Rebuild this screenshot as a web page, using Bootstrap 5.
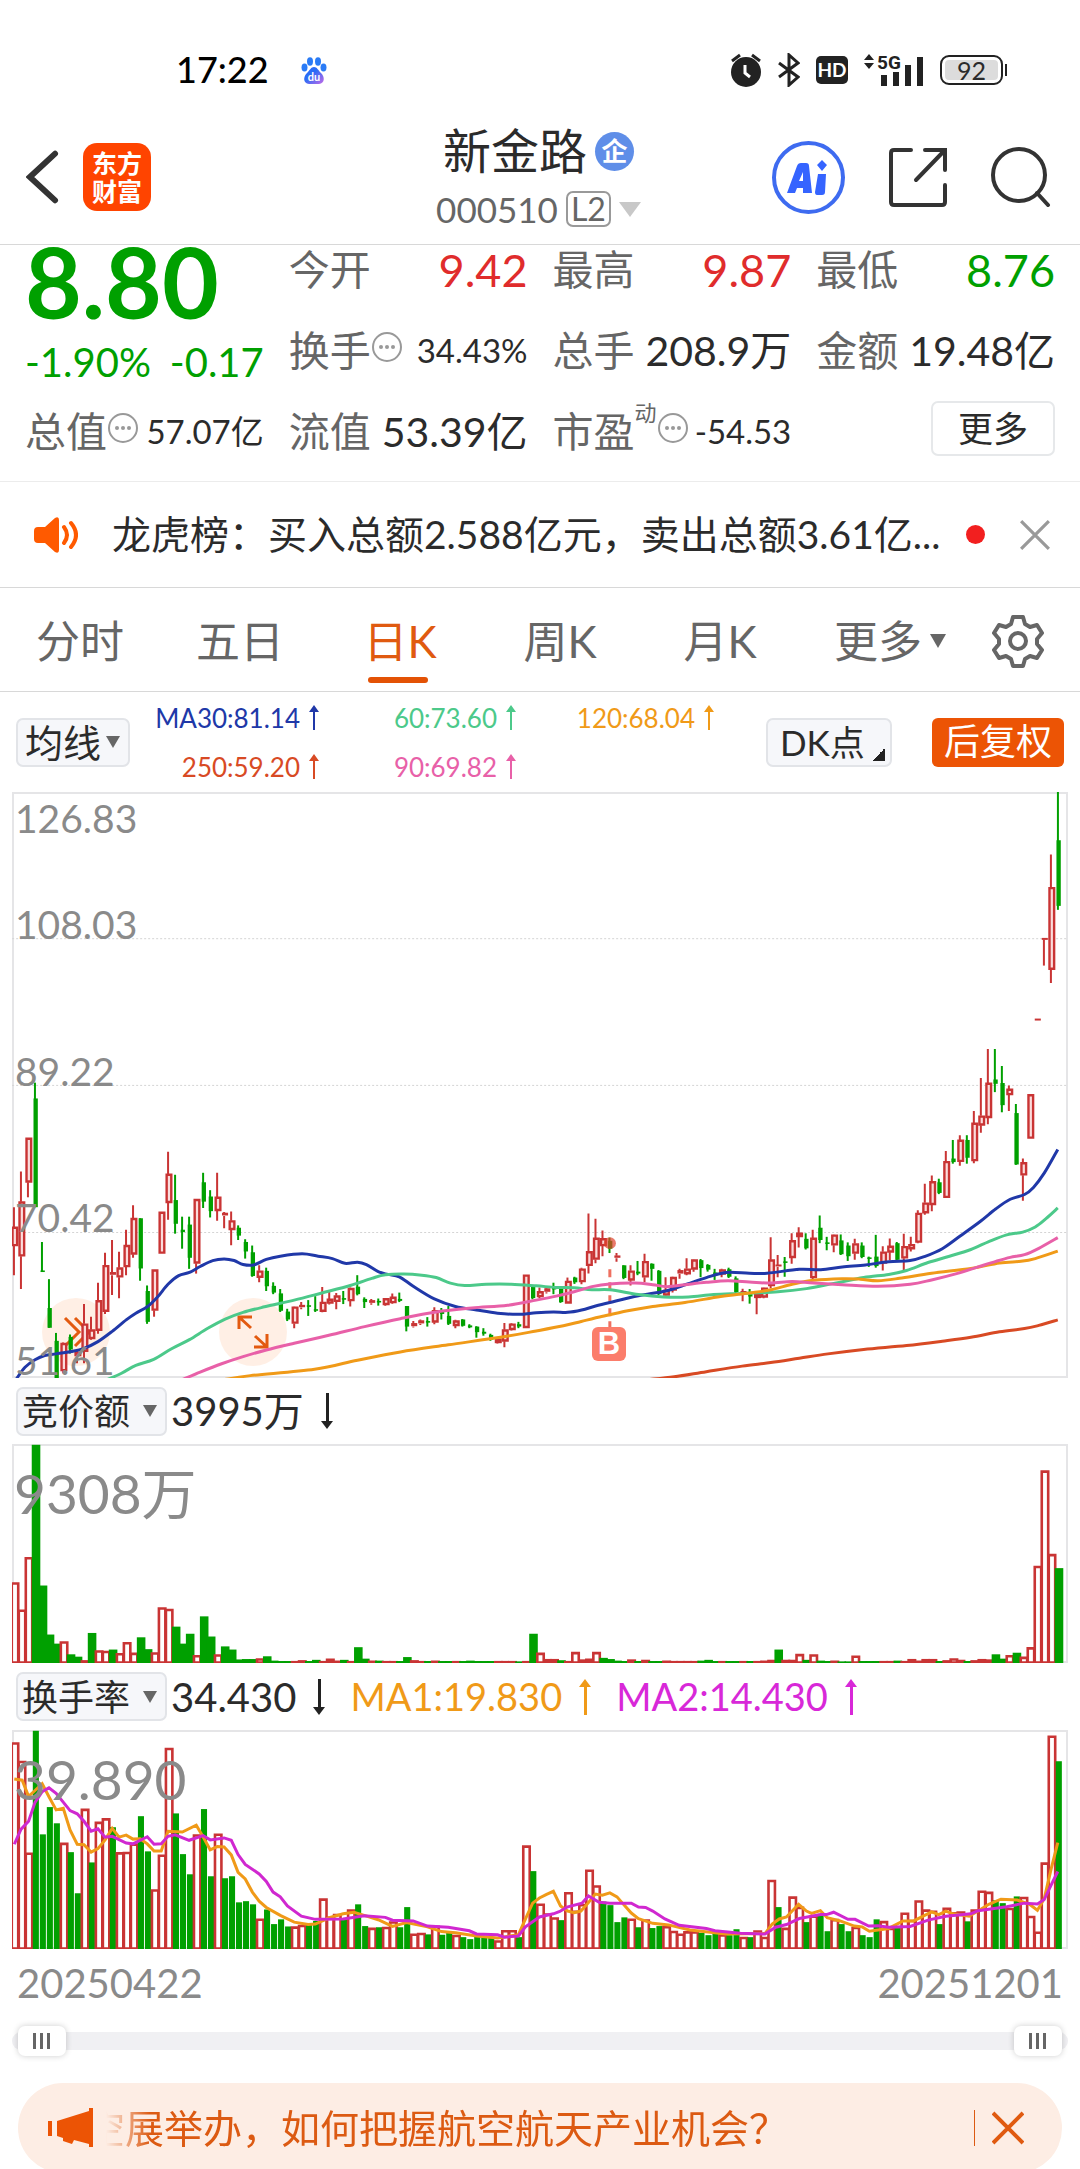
<!DOCTYPE html>
<html lang="zh-CN">
<head>
<meta charset="utf-8">
<meta name="viewport" content="width=device-width, initial-scale=1">
<title>新金路 000510</title>
<link href="https://cdn.jsdelivr.net/npm/bootstrap@5.3.0/dist/css/bootstrap.min.css" rel="stylesheet">
<style>
:root{--up:#c93434;--down:#00a000;--brand:#ec5405;--line:#d8d8d8;--ink:#2b2b2b;--soft:#666;--axis:#8a8a8a}
body{font-family:Lato,"Noto Sans CJK SC",sans-serif;color:var(--ink);background:#fff;line-height:1.2}
svg{display:block;flex:none}
button,select{font-family:inherit;color:inherit;padding:0}
.plain-btn{border:0;background:none;line-height:1}
.side{flex:1}
.side-tools{gap:43px}
.status-bar{height:110px;padding:45px 72px 15px 176px}
.clock{font-size:36px;color:#000;font-weight:500}
.battery{width:63px;height:30px;border:2px solid #222;border-radius:9px;font-size:25px;background:#dcdcdc;box-shadow:inset 0 0 0 3px #fff;line-height:26px}
.status-icons{gap:16px}
.top-bar{height:135px;border-bottom:1px solid var(--line);padding:0 29px 0 26px}
.logo-tile{width:68px;height:68px;border-radius:14px;background:#ff4400;color:#fff;font-size:25px;line-height:28px;font-weight:700}
.stock-name{font-size:48px;line-height:56px}
.stock-code{font-size:35px;line-height:44px;color:var(--soft);margin-top:8px}
.level-tag{border:2px solid #999;border-radius:7px;font-size:32px;line-height:32px;padding:0 3px}
.corp-tag{width:39px;height:39px;border-radius:50%;background:#5f8ee8;color:#fff;font-size:26px;font-weight:700;line-height:38px}
.ai-ring{width:73px;height:73px;border:4px solid #3e6bf0;border-radius:50%;color:#3e6bf0}
.quote{display:grid;grid-template-columns:repeat(4,1fr);grid-auto-rows:50px;column-gap:25px;row-gap:31px;padding:0 25px 24px;border-bottom:1px solid #ececec}
.price-block{grid-row:span 2;color:var(--down)}
.last-price{font-size:98px;line-height:72px;font-weight:700}
.change-line{font-size:40px;line-height:50px;margin-top:20px}
.cell-label{font-size:41px;line-height:50px;color:var(--soft)}
.val-lg{font-size:45px}.val-md{font-size:41px}.val-sm{font-size:33px}
.quote svg{margin-bottom:8px}
.txt-up{color:#e02c2c}.txt-down{color:var(--down)}
.dyn{font-size:22px;color:var(--soft);align-self:flex-start;line-height:12px}
.more-btn{width:124px;height:55px;border:2px solid #e6e8ea;border-radius:7px;font-size:35px;background:#fff;margin-bottom:8px}
.notice{height:106px;border-bottom:1px solid var(--line);padding:0 29px 0 34px;font-size:39px;gap:34px}
.notice-txt{min-width:0;overflow:hidden;white-space:nowrap;margin-right:-24px}
.red-dot{width:19px;height:19px;border-radius:50%;background:#f21f1f;flex:none}
.k-tabs{display:grid;grid-template-columns:repeat(5,16fr) 18fr 10fr;height:104px;border-bottom:1px solid var(--line);font-size:44px;color:var(--soft)}
.k-tabs .plain-btn{position:relative;padding-top:2px}
.k-tabs .active{color:#e05a10}
.k-tabs .active::after{content:"";position:absolute;left:50%;bottom:8px;width:60px;height:6px;margin-left:-32px;border-radius:3px;background:#e35205}
.tri{display:inline-block;border:solid transparent;border-width:14px 8px 0;border-top-color:var(--soft)}
.tri-code{border-width:15px 11px 0;border-top-color:#c8c8c8}
.ma-bar{height:100px;padding:0 16px}
.pick{appearance:none;border:2px solid #e2e4e8;border-radius:7px;background:#f6f7fa url("data:image/svg+xml,%3Csvg xmlns='http://www.w3.org/2000/svg' viewBox='0 0 14 12'%3E%3Cpath d='M0 0h14L7 12z' fill='%23666'/%3E%3C/svg%3E") no-repeat right 8px center/14px 12px;height:49px;font-size:36px;line-height:44px;padding-left:4px}
.pick-ma{width:114px;font-size:38px;padding-left:7px}
.pick-sub{width:151px}
.dk-btn{width:126px;height:49px;border:2px solid #e2e4e8;border-radius:7px;background:linear-gradient(135deg,transparent 50%,#222 50%) right 5px bottom 4px/13px 13px no-repeat #f6f7fa;font-size:35px;line-height:44px;text-align:left;padding-left:12px}
.adj-btn{width:132px;height:49px;border:0;border-radius:6px;background:var(--brand);color:#fff;font-size:36px;margin-left:40px}
.ma-grid{display:grid;grid-template-columns:162px 197px 198px;row-gap:15px;font-size:26px;line-height:34px;margin-left:28px}
.c-30{color:#2038a8}.c-60{color:#4cc98a}.c-90{color:#e860a8}.c-120{color:#f09a18}.c-250{color:#d84a24}.c-m2{color:#d828d8}
.ma-grid>div{display:flex;justify-content:flex-end;align-items:center;gap:8px}
.pane{position:relative;margin:0 12px;box-shadow:inset 0 0 0 2px #e5e5e7}
.pane>svg{width:100%;position:relative}
.pane-k{height:586px}.pane-k>svg{height:586px}
.pane-s{height:219px}.pane-s>svg{height:219px}
.axis-label{position:absolute;left:3px;font-size:39px;line-height:40px;color:var(--axis)}
.ax1{top:6px}.ax2{bottom:434px}.ax3{bottom:287px}.ax4{bottom:141px}.ax5{bottom:-2px}
.peak{position:absolute;left:2px;top:19px;font-size:55px;line-height:60px;color:var(--axis)}
.round-tool{position:absolute;width:68px;height:68px;border:0;border-radius:50%;background:rgba(255,216,192,.42);display:flex;align-items:center;justify-content:center;top:506px}
.tool-next{left:30px}.tool-zoom{left:207px}
.buy-pin{position:absolute;left:580px;top:535px;width:34px;height:34px;border-radius:6px;background:#fb7d6b;color:#fff;font:700 31px/34px "Liberation Sans",sans-serif;text-align:center}
.sub-head{height:66px;padding:0 16px;font-size:38px}
.sub-val{font-size:40px}
.pane-s+.sub-head{height:67px}
.dates{height:68px;padding:0 17px;font-size:40px;color:var(--axis)}
.range-box{position:relative;height:48px;margin:0 12px}
.range-box::before{content:"";position:absolute;left:0;right:0;top:15px;height:18px;border-radius:9px;background:#f0f0f3}
.range-box input{position:absolute;left:6px;right:6px;top:9px;width:calc(100% - 12px);height:30px;margin:0;appearance:none;background:none;pointer-events:none}
.range-box input::-webkit-slider-thumb{appearance:none;pointer-events:auto;width:48px;height:30px;border-radius:7px;box-shadow:0 0 6px rgba(0,0,0,.2);background:linear-gradient(#666,#666) 15px 7px/3px 16px no-repeat,linear-gradient(#666,#666) 22px 7px/3px 16px no-repeat,linear-gradient(#666,#666) 29px 7px/3px 16px no-repeat,#fff}
.promo{height:90px;margin:18px 18px 0;border-radius:45px;background:#fdede4;color:#dc5a12;padding:0 38px 0 30px;font-size:39px}
.ticker{overflow:hidden;display:flex;height:52px;line-height:52px;margin-left:12px;color:#dc5a12;text-decoration:none;-webkit-mask-image:linear-gradient(90deg,transparent,#000 44px);mask-image:linear-gradient(90deg,transparent,#000 44px)}
.ticker span{margin-left:-20px;white-space:nowrap}
.promo-sep{width:1px;height:36px;background:#dc5a12;margin-right:17px}
</style>
</head>
<body>
<div class="vh-100 overflow-hidden d-flex flex-column">
<div class="status-bar d-flex align-items-center justify-content-between flex-shrink-0">
  <div class="d-flex align-items-center gap-4">
    <span class="clock">17:22</span>
    <svg class="ms-2" width="26" height="27" viewBox="0 0 26 27"><defs><linearGradient id="pw" x1="0" y1="0" x2="1" y2="1"><stop offset=".4" stop-color="#2a6cf6"/><stop offset="1" stop-color="#c46ae8"/></linearGradient></defs><g fill="#2a7bf6"><ellipse cx="3.500" cy="10.500" rx="3" ry="4"/><ellipse cx="9" cy="4.500" rx="3" ry="4.200"/><ellipse cx="17" cy="4.500" rx="3" ry="4.200"/><ellipse cx="22.500" cy="10.500" rx="3" ry="4"/></g><path d="M13 10c3 0 4 3 7 6 4 4 4 10-2 11H8c-6-1-6-7-2-11 3-3 4-6 7-6z" fill="url(#pw)"/><text x="13" y="24" font-size="11" font-weight="700" fill="#fff" text-anchor="middle">du</text></svg>
  </div>
  <div class="status-icons d-flex align-items-center">
    <svg width="32" height="34" viewBox="0 0 32 34"><circle cx="16" cy="19" r="15" fill="#222"/><path d="M2 8l8-6M30 8l-8-6" stroke="#222" stroke-width="3"/><path d="M15 12v8l5 4" stroke="#fff" stroke-width="3" fill="none"/></svg>
    <svg width="22" height="34" viewBox="0 0 22 34"><path d="M1 10l19 14-9 8V2l9 8L1 24" fill="none" stroke="#222" stroke-width="3"/></svg>
    <svg width="32" height="28" viewBox="0 0 32 28"><rect width="32" height="28" rx="5" fill="#222"/><text x="16" y="21" font-size="19" font-weight="700" fill="#fff" text-anchor="middle">HD</text></svg>
    <svg class="ms-n1" width="60" height="38" viewBox="0 -5 60 38"><path d="M0 4l5-6 5 6zM0 7h10l-5 6z" fill="#222"/><text x="13" y="13" font-size="19" font-weight="700" font-family="Roboto" fill="#222">5G</text><path d="M17 19h6v11h-6zM29 16h6v14h-6zM41 9h6v21h-6zM53 1h6v29h-6z" fill="#222"/></svg>
    <div class="d-flex align-items-center"><div class="battery text-center">92</div><svg width="5" height="12" viewBox="0 0 5 12"><path d="M2 0h2v12H2z" fill="#222"/></svg></div>
  </div>
</div>

<header class="top-bar d-flex align-items-center flex-shrink-0">
  <div class="side d-flex align-items-center gap-4">
    <button class="plain-btn" aria-label="返回"><svg width="33" height="54" viewBox="0 0 34 54"><path d="M30 3L4 27l26 24" fill="none" stroke="#333" stroke-width="6" stroke-linecap="round"/></svg></button>
    <button class="logo-tile border-0 text-center" aria-label="东方财富">东方<br>财富</button>
  </div>
  <div>
    <div class="d-flex align-items-center justify-content-center gap-2"><span class="stock-name">新金路</span><span class="corp-tag text-center">企</span></div>
    <div class="stock-code d-flex align-items-center justify-content-center gap-2"><span>000510</span><span class="level-tag">L2</span><i class="tri tri-code"></i></div>
  </div>
  <div class="side side-tools d-flex align-items-center justify-content-end">
    <button class="plain-btn ai-ring" aria-label="AI"><svg width="65" height="65" viewBox="0 0 65 65"><path d="M11 48l10-27q1-3 4-3h5q3 0 3 3l3 27h-9v-5h-6l-2 5zM23 36h4v-9z" fill="#3564ff"/><path d="M42 29h8l-1 18q0 3-3 3h-5q-2 0-2-3zM46 15l5 5-5 6-5-6z" fill="#3564ff"/></svg></button>
    <button class="plain-btn" aria-label="分享"><svg width="60" height="60" viewBox="0 0 60 60"><path d="M23 3H6Q3 3 3 6v49q0 3 3 3h48q3 0 3-3V38M37 3h20v20M57 3L28 33" fill="none" stroke="#333" stroke-width="4" stroke-linecap="round"/></svg></button>
    <button class="plain-btn" aria-label="搜索"><svg width="60" height="60" viewBox="0 0 60 60"><circle cx="28" cy="28" r="26" fill="none" stroke="#333" stroke-width="4"/><path d="M46 46l11 12" stroke="#333" stroke-width="4" stroke-linecap="round"/></svg></button>
  </div>
</header>

<section class="quote flex-shrink-0">
  <div class="price-block">
    <div class="last-price">8.80</div>
    <div class="change-line d-flex justify-content-between"><span>-1.90%</span><span>-0.17</span></div>
  </div>
  <div class="d-flex align-items-center justify-content-between"><span class="cell-label">今开</span><span class="val-lg txt-up">9.42</span></div>
  <div class="d-flex align-items-center justify-content-between"><span class="cell-label">最高</span><span class="val-lg txt-up">9.87</span></div>
  <div class="d-flex align-items-center justify-content-between"><span class="cell-label">最低</span><span class="val-lg txt-down">8.76</span></div>
  <div class="d-flex align-items-center justify-content-between"><span class="d-flex align-items-center"><span class="cell-label">换手</span><svg width="32" height="32"><use href="#dots"/></svg></span><span class="val-sm">34.43%</span></div>
  <div class="d-flex align-items-center justify-content-between"><span class="cell-label">总手</span><span class="val-md">208.9万</span></div>
  <div class="d-flex align-items-center justify-content-between"><span class="cell-label">金额</span><span class="val-md">19.48亿</span></div>
  <div class="d-flex align-items-center justify-content-between"><span class="d-flex align-items-center"><span class="cell-label">总值</span><svg width="32" height="32"><use href="#dots"/></svg></span><span class="val-sm">57.07亿</span></div>
  <div class="d-flex align-items-center justify-content-between"><span class="cell-label">流值</span><span class="val-md">53.39亿</span></div>
  <div class="d-flex align-items-center justify-content-between"><span class="d-flex align-items-center"><span class="cell-label">市盈</span><span class="dyn">动</span><svg width="32" height="32"><use href="#dots"/></svg></span><span class="val-sm">-54.53</span></div>
  <div class="d-flex align-items-center justify-content-end"><button class="more-btn">更多</button></div>
</section>
<svg width="0" height="0" class="position-absolute"><symbol id="dots" viewBox="0 0 32 32"><circle cx="16" cy="16" r="14" fill="none" stroke="#999" stroke-width="2"/><g fill="#999"><circle cx="10" cy="16" r="2"/><circle cx="16" cy="16" r="2"/><circle cx="22" cy="16" r="2"/></g></symbol>
<symbol id="arr" viewBox="0 0 12 25"><path d="M6 0l5 7H7v18H5V7H1z" fill="currentColor"/></symbol></svg>

<section class="notice d-flex align-items-center flex-shrink-0">
  <svg width="44" height="36" viewBox="0 0 44 36"><path d="M4 10h7L21 1q4-2 4 2v30q0 4-4 2l-10-9H4q-4 0-4-4v-8q0-4 4-4z" fill="#ff5a00"/><path d="M30 10q6 8 0 16M37 6q10 12 0 24" fill="none" stroke="#ff5a00" stroke-width="4" stroke-linecap="round"/></svg>
  <a class="notice-txt flex-fill text-reset text-decoration-none" href="#">龙虎榜：买入总额2.588亿元，卖出总额3.61亿...</a>
  <span class="red-dot"></span>
  <button class="plain-btn" aria-label="关闭"><svg width="32" height="32" viewBox="0 0 30 30"><path d="M2 2l26 26M28 2L2 28" stroke="#999" stroke-width="3"/></svg></button>
</section>

<nav class="k-tabs flex-shrink-0">
  <button class="plain-btn">分时</button><button class="plain-btn">五日</button><button class="plain-btn active">日K</button><button class="plain-btn">周K</button><button class="plain-btn">月K</button>
  <button class="plain-btn d-flex align-items-center justify-content-center gap-2">更多<i class="tri"></i></button>
  <button class="plain-btn pe-4 d-flex align-items-center justify-content-center" aria-label="设置"><svg width="54" height="54" viewBox="0 0 54 54" fill="none" stroke="#666" stroke-width="4" stroke-linejoin="round"><path d="M22 3h10l2 7 5 3 7-2 5 8-5 6v5l5 6-5 8-7-2-5 3-2 7H22l-2-7-5-3-7 2-5-8 5-6v-5l-5-6 5-8 7 2 5-3z"/><circle cx="27" cy="27" r="8"/></svg></button>
</nav>

<section class="ma-bar d-flex align-items-center flex-shrink-0">
  <select class="pick pick-ma" aria-label="均线"><option>均线</option></select>
  <div class="ma-grid">
    <div class="c-30">MA30:81.14<svg width="12" height="25"><use href="#arr"/></svg></div>
    <div class="c-60">60:73.60<svg width="12" height="25"><use href="#arr"/></svg></div>
    <div class="c-120">120:68.04<svg width="12" height="25"><use href="#arr"/></svg></div>
    <div class="c-250">250:59.20<svg width="12" height="25"><use href="#arr"/></svg></div>
    <div class="c-90">90:69.82<svg width="12" height="25"><use href="#arr"/></svg></div>
  </div>
  <button class="dk-btn ms-auto">DK点</button>
  <button class="adj-btn">后复权</button>
</section>

<div class="pane pane-k flex-shrink-0">
  <button class="round-tool tool-next" aria-label="下一页"><svg width="32" height="34" viewBox="0 0 32 34" fill="none" stroke="#e35a10" stroke-width="3"><path d="M5 3l14 14L5 31M15 3l14 14-14 14"/></svg></button>
  <button class="round-tool tool-zoom" aria-label="放大"><svg width="34" height="36" viewBox="0 0 34 36" fill="none" stroke="#e35a10" stroke-width="3"><path d="M15 14L3 3M3 15V3h13M19 22l12 11M31 20v13H18"/></svg></button>
  <svg id="kline" viewBox="33.6 30 2954 1482" preserveAspectRatio="none"></svg>
  <span class="axis-label ax1">126.83</span><span class="axis-label ax2">108.03</span><span class="axis-label ax3">89.22</span><span class="axis-label ax4">70.42</span><span class="axis-label ax5">51.61</span>
  <span class="buy-pin">B</span>
</div>

<div class="sub-head d-flex align-items-center flex-shrink-0">
  <select class="pick pick-sub" aria-label="副图一"><option>竞价额</option></select>
  <span class="sub-val ms-1">3995万</span><svg class="ms-3" width="14" height="36" viewBox="0 0 12 36"><path d="M6 36l6-8H8V0H5v28H0z" fill="#222"/></svg>
</div>
<div class="pane pane-s flex-shrink-0"><svg id="auction" viewBox="33.6 163 2954 554" preserveAspectRatio="none"></svg><span class="peak">9308万</span></div>

<div class="sub-head d-flex align-items-center flex-shrink-0">
  <select class="pick pick-sub" aria-label="副图二"><option>换手率</option></select>
  <span class="sub-val ms-1">34.430</span><svg class="ms-3" width="14" height="36" viewBox="0 0 12 36"><path d="M6 36l6-8H8V0H5v28H0z" fill="#222"/></svg>
  <span class="c-120 ms-4">MA1:19.830</span><svg class="c-120 ms-3" width="14" height="36" viewBox="0 0 12 36"><path d="M6 0l6 8H8v28H5V8H0z" fill="currentColor"/></svg>
  <span class="c-m2 ms-4">MA2:14.430</span><svg class="c-m2 ms-3" width="14" height="36" viewBox="0 0 12 36"><path d="M6 0l6 8H8v28H5V8H0z" fill="currentColor"/></svg>
</div>
<div class="pane pane-s flex-shrink-0"><svg id="turnover" viewBox="33.6 887 2954 554" preserveAspectRatio="none"></svg><span class="peak">39.890</span></div>

<div class="dates d-flex align-items-center justify-content-between flex-shrink-0"><span>20250422</span><span>20251201</span></div>
<div class="range-box flex-shrink-0"><input type="range" value="0" aria-label="起始日期"><input type="range" value="100" aria-label="结束日期"></div>

<section class="promo d-flex align-items-center flex-shrink-0">
  <svg width="46" height="40" viewBox="0 0 46 40"><path d="M0 13h4v15H0zM9 13l32-10V0h4v39h-4v-3l-15-4-2 4-9-3v-3l-6-2z" fill="#ec5405"/></svg>
  <a class="ticker flex-fill" href="#"><span>空展举办，如何把握航空航天产业机会？</span></a>
  <span class="promo-sep"></span>
  <button class="plain-btn" aria-label="关闭"><svg width="32" height="34" viewBox="0 0 32 34"><path d="M1 2l30 30M31 2L1 32" stroke="#e05a10" stroke-width="4"/></svg></button>
</section>
</div>

<script src="https://cdn.jsdelivr.net/npm/bootstrap@5.3.0/dist/js/bootstrap.bundle.min.js"></script>
<script>
const RED='#c93434',GREEN='#00a000',X=i=>39+19.6*i;
const line=(c,p,w)=>`<path d="${p}" fill="none" stroke="${c}" stroke-width="${w}" vector-effect="non-scaling-stroke"/>`;
// each candle: colour high top bottom low
const candles=`r1080 1130 1178 1252,r990 1066 1204 1287,r905 905 1017 1055,g765 805 1080 1080,g1168 1240 1243 1243,g1262 1335 1385 1385,g1398 1418 1512 1512,r1422 1424 1494 1500,g1402 1408 1440 1450,r1440 1446 1456 1475,r1325 1375 1445 1475,r1357 1390 1413 1415,r1271 1316 1392 1400,r1195 1227 1344 1350,r1163 1245 1252 1302,r1193 1233 1257 1310,r1137 1176 1231 1252,r1075 1108 1199 1208,g1108 1108 1235 1266,g1278 1292 1370 1375,r1238 1238 1341 1357,r1092 1092 1197 1197,r940 996 1069 1112,g998 1062 1122 1147,g1104 1137 1143 1185,g1104 1124 1208 1236,r1060 1060 1222 1248,g993 1017 1066 1082,g1037 1053 1090 1106,r993 1054 1089 1114,r1092 1095 1102 1133,r1091 1114 1137 1176,g1126 1132 1152 1163,g1161 1168 1192 1210,g1177 1194 1254 1256,r1227 1241 1258 1270,g1233 1241 1280 1292,g1270 1279 1296 1300,g1287 1298 1342 1345,g1337 1344 1364 1368,r1331 1332 1374 1386,r1320 1328 1334 1338,g1315 1328 1331 1355,g1305 1338 1342 1345,r1282 1320 1344 1346,r1290 1312 1323 1326,r1297 1304 1319 1338,g1292 1310 1314 1325,r1283 1285 1317 1331,g1252 1281 1300 1303,g1308 1312 1320 1335,r1312 1316 1323 1327,g1311 1317 1321 1329,r1310 1311 1327 1329,r1298 1307 1322 1324,g1296 1312 1317 1320,g1330 1330 1382 1394,r1368 1374 1382 1384,r1364 1367 1375 1378,g1358 1368 1371 1382,r1333 1341 1371 1376,g1335 1340 1350 1364,g1330 1355 1375 1378,r1365 1367 1380 1386,g1363 1364 1380 1382,g1376 1379 1384 1386,g1381 1382 1396 1410,g1386 1395 1400 1405,g1400 1403 1415 1418,r1410 1413 1423 1425,r1373 1390 1419 1434,r1373 1375 1390 1392,g1370 1376 1382 1386,r1251 1251 1385 1385,g1280 1280 1310 1313,r1283 1293 1307 1310,r1282 1286 1295 1298,g1271 1284 1288 1300,g1280 1284 1320 1322,r1258 1267 1323 1323,g1256 1258 1270 1274,r1233 1236 1269 1275,r1096 1192 1228 1248,r1109 1158 1212 1222,r1139 1159 1178 1204,g1157 1165 1185 1196,r1196 1203 1209 1218,g1227 1227 1259 1262,r1227 1241 1265 1278,g1216 1243 1248 1252,r1198 1217 1257 1270,g1222 1223 1236 1266,g1239 1241 1300 1302,r1257 1290 1303 1304,r1256 1257 1290 1296,r1236 1240 1249 1261,r1209 1236 1249 1252,r1212 1213 1237 1243,g1211 1214 1234 1257,g1224 1226 1238 1243,g1236 1245 1252 1264,r1236 1238 1250 1257,g1233 1237 1256 1259,g1255 1260 1295 1300,r1286 1293 1297 1318,g1287 1300 1306 1324,r1295 1299 1309 1351,r1283 1284 1308 1310,r1156 1213 1279 1285,r1201 1226 1231 1257,g1206 1217 1221 1256,r1146 1164 1208 1223,r1131 1145 1155 1182,g1146 1160 1184 1187,r1137 1158 1259 1262,g1101 1132 1163 1171,g1155 1169 1173 1189,r1149 1150 1176 1194,g1149 1164 1199 1201,g1169 1177 1204 1216,r1160 1172 1197 1213,g1169 1177 1206 1209,g1205 1207 1210 1231,g1150 1205 1229 1233,r1179 1193 1222 1240,r1159 1178 1194 1214,g1168 1171 1213 1218,r1147 1179 1209 1239,r1155 1174 1186 1192,r1088 1095 1169 1171,r1021 1069 1095 1099,r1000 1015 1074 1090,g1008 1017 1044 1047,r938 964 1056 1057,g910 957 966 970,r898 910 965 975,g898 910 955 970,r837 867 963 969,r753 849 873 892,r680 766 854 870,g680 757 768 789,g723 766 822 840,r772 781 796 837,g819 842 972 973,r957 967 999 1064,r795 795 906 906,r604 604 608 608,r400 400 403 469,r188 271 479 513,g30 152 318 328`.split(',');
function spline(s){
  const p=s.trim().split(/\s+/).map(q=>q.split(',').map(Number));let d='M'+p[0];
  for(let i=0;i<p.length-1;i++){const a=p[i-1]||p[i],b=p[i],c=p[i+1],e=p[i+2]||c;
    d+=`C${b[0]+(c[0]-a[0])/6},${b[1]+(c[1]-a[1])/6} ${c[0]-(e[0]-b[0])/6},${c[1]-(e[1]-b[1])/6} ${c}`}
  return d}
let k='';
[401,772,1144].forEach(y=>k+=`<path d="M34 ${y}H2987" stroke="#d4d4d4" stroke-width="1" stroke-dasharray="2 2" vector-effect="non-scaling-stroke"/>`);
candles.forEach((s,i)=>{
  const [h,t,b,l]=s.slice(1).split(' ').map(Number),x=X(i),c=s[0]=='r'?RED:GREEN;
  if(s[0]=='g'){k+=line(c,`M${x} ${h}V${l}`,2)+`<rect x="${x-4}" y="${t}" width="12" height="${Math.max(b-t,4)}" fill="${c}"/>`}
  else{k+=line(c,`M${x} ${h}V${t}M${x} ${b}V${l}`,2);
    k+=b-t<10?`<rect x="${x-6}" y="${t-1}" width="17" height="${Math.max(b-t,5)}" fill="${c}"/>`
      :`<rect x="${x-4}" y="${t+2}" width="13" height="${b-t-4}" fill="#fbdcdc" stroke="${c}" stroke-width="2.4" vector-effect="non-scaling-stroke"/>`}
});
const ma={
'#d84a24':'1816,1516 1886,1509 1976,1496 2076,1482 2156,1473 2236,1462 2316,1451 2416,1440 2536,1430 2636,1419 2716,1409 2796,1395 2866,1387 2906,1379 2959,1365',
'#2038a8':'46,1514 70,1485 98,1466 125,1455 157,1451 200,1445 235,1437 274,1420 314,1394 353,1365 380,1348 412,1332 440,1308 470,1275 500,1253 530,1245 560,1230 595,1215 627,1211 655,1215 680,1225 710,1226 745,1212 784,1204 845,1198 890,1204 930,1210 965,1222 1000,1219 1025,1225 1058,1243 1085,1250 1117,1256 1156,1280 1215,1312 1274,1331 1333,1340 1392,1348 1450,1351 1500,1347 1548,1345 1588,1346 1627,1340 1666,1330 1706,1321 1786,1304 1862,1292 1921,1275 1976,1258 2031,1245 2096,1247 2146,1247 2236,1237 2296,1238 2356,1231 2421,1226 2486,1218 2546,1215 2586,1205 2636,1185 2686,1153 2741,1117 2786,1084 2826,1060 2866,1048 2891,1030 2921,994 2959,934',
'#4cc98a':'300,1516 340,1500 380,1480 430,1465 480,1438 530,1415 580,1387 630,1363 680,1346 740,1332 823,1315 900,1297 980,1278 1040,1260 1078,1251 1130,1249 1180,1252 1220,1258 1260,1272 1300,1278 1360,1275 1430,1275 1500,1279 1556,1283 1606,1284 1656,1289 1706,1289 1786,1301 1856,1307 1926,1307 1996,1301 2076,1298 2176,1294 2256,1286 2336,1272 2416,1258 2486,1250 2536,1240 2596,1220 2656,1204 2716,1187 2766,1167 2816,1150 2861,1143 2896,1130 2926,1109 2959,1082',
'#f09a18':'627,1516 700,1506 880,1490 1000,1467 1120,1446 1254,1428 1400,1409 1500,1393 1576,1380 1626,1369 1686,1356 1756,1342 1826,1331 1916,1321 2016,1306 2096,1297 2156,1289 2216,1275 2276,1265 2356,1261 2406,1262 2456,1266 2516,1260 2606,1247 2716,1235 2796,1221 2856,1217 2896,1210 2959,1191',
'#e860a8':'510,1516 560,1497 620,1476 680,1458 745,1441 823,1424 920,1404 1020,1382 1120,1362 1220,1345 1320,1335 1420,1328 1500,1315 1556,1305 1606,1294 1656,1281 1706,1274 1776,1272 1826,1276 1866,1281 1916,1276 1976,1270 2036,1266 2096,1269 2156,1272 2216,1268 2276,1272 2356,1276 2456,1280 2546,1275 2606,1264 2676,1248 2736,1231 2786,1217 2826,1207 2866,1200 2906,1184 2959,1157'};
k+=`<path d="M1706 1237V1383" stroke="#ef7060" stroke-width="3" stroke-dasharray="8 5" vector-effect="non-scaling-stroke"/><ellipse cx="1706" cy="1171" rx="17" ry="15" fill="#e0402c" opacity=".7"/>`;
for(const c in ma)k+=line(c,spline(ma[c]),3);
document.getElementById('kline').innerHTML=k;

// bar panes: colour + top of each bar
function bars(list,base,gl,gw){
  let o='';
  list.split(' ').forEach((s,i)=>{const t=+s.slice(1),x=X(i);
    o+=s[0]=='g'?`<rect x="${x-gl}" y="${t}" width="${gw}" height="${base-t}" fill="${GREEN}"/>`
      :`<rect x="${x-6}" y="${Math.min(t+2,base-2)}" width="18" height="${Math.max(base-t-3,1)}" fill="#fff" stroke="${RED}" stroke-width="2.6" vector-effect="non-scaling-stroke"/>`});
  return o}
const auction='r514 r583 r450 g165 g521 g645 g668 r663 g695 g701 r711 g641 r686 r687 g683 r693 r665 r692 g652 g682 r691 r577 r581 g625 g668 g643 r698 g599 g650 r696 g675 g683 g708 g707 g707 r706 g700 g711 g712 g712 r713 r711 g712 g709 r713 r707 r712 g709 r713 g677 g706 r712 g711 r713 r713 g712 g702 r711 r713 g712 r712 g712 g712 r713 g712 g711 g712 g712 g712 r713 r713 r713 g713 r713 g643 r692 r708 r708 g710 r713 r690 r709 r707 r690 g704 g707 g711 g712 r709 g712 r710 g712 g712 r712 r713 r713 r713 r713 g711 g709 g712 r713 g712 g712 r713 g712 r713 r712 r710 g683 r710 r710 r695 g709 r696 g711 g712 r712 g713 g713 r699 g712 g712 g712 r713 r713 g711 r713 r708 r712 r708 r708 g712 r711 r706 r710 g712 r711 r708 r709 g695 g706 r698 g691 r702 r678 r472 r231 r442 g477';
document.getElementById('auction').innerHTML=bars(auction,717,9,24);
const turnover='r919 r966 r1198 g889 g1151 g1082 g1123 r1173 g1196 g1300 r1087 g1222 r1120 r1111 g1133 r1197 r1196 r1175 g1105 g1194 r1291 r1203 r933 g1098 g1201 g1252 r1152 g1087 g1257 r1150 g1262 g1257 g1323 g1320 g1328 r1365 g1341 g1378 g1366 g1384 r1385 r1381 g1378 g1370 r1314 r1360 r1353 g1365 r1342 g1328 g1383 r1388 g1386 r1386 r1372 g1386 g1335 r1403 r1401 g1404 r1383 g1405 g1400 r1406 g1411 g1416 g1410 g1413 g1413 r1420 r1394 r1394 g1411 r1180 g1244 r1327 r1352 r1362 g1368 r1298 r1345 r1328 r1241 r1281 g1321 g1330 g1373 g1361 r1365 g1386 r1367 g1388 g1383 r1384 r1396 r1403 r1397 r1397 g1400 g1406 g1403 r1405 g1406 g1391 r1411 g1411 r1395 r1411 r1267 g1335 r1388 r1309 r1335 g1373 r1357 g1352 g1396 r1366 g1378 g1396 r1386 g1406 g1411 g1366 r1371 r1388 g1388 r1350 r1368 r1319 r1342 r1345 g1378 r1337 r1349 r1347 g1371 r1342 r1294 r1297 g1318 g1325 r1338 g1308 r1310 r1358 r1398 r1223 r902 g966';
const m1='40,1011 62,1014 80,1055 98,1040 118,1023 137,1056 157,1089 177,1085 196,1140 216,1176 235,1177 255,1196 274,1187 294,1165 314,1136 333,1158 353,1153 372,1163 392,1162 412,1175 431,1193 451,1193 470,1143 510,1145 549,1128 568,1157 588,1190 608,1182 627,1183 647,1203 666,1247 686,1264 706,1297 725,1320 745,1336 784,1356 823,1373 862,1379 882,1378 921,1362 960,1352 990,1348 1019,1356 1058,1367 1098,1384 1137,1374 1196,1385 1235,1397 1274,1400 1333,1408 1392,1413 1450,1405 1470,1365 1490,1325 1509,1312 1529,1303 1548,1295 1568,1332 1588,1345 1606,1349 1625,1345 1645,1325 1665,1302 1685,1305 1706,1299 1726,1309 1746,1330 1766,1350 1786,1364 1826,1376 1870,1380 1930,1393 2031,1403 2140,1402 2160,1378 2180,1365 2200,1360 2234,1328 2256,1345 2270,1351 2295,1344 2314,1362 2350,1370 2390,1383 2412,1385 2432,1396 2486,1389 2526,1370 2556,1370 2606,1347 2626,1354 2646,1345 2666,1352 2711,1358 2736,1345 2766,1328 2800,1315 2846,1317 2880,1328 2902,1343 2921,1314 2940,1240 2959,1172';
const m2='40,1176 59,1138 80,1118 98,1070 118,1043 137,1033 157,1047 196,1091 216,1099 235,1118 255,1143 274,1137 294,1158 314,1156 353,1173 372,1175 412,1157 431,1176 451,1175 470,1156 490,1152 529,1166 568,1154 588,1165 627,1160 647,1166 666,1202 686,1227 725,1251 745,1270 764,1297 784,1309 804,1332 843,1358 882,1366 960,1365 1019,1357 1078,1361 1098,1368 1156,1370 1196,1383 1254,1386 1313,1395 1333,1403 1392,1405 1411,1411 1450,1408 1470,1385 1509,1360 1548,1352 1566,1346 1586,1335 1628,1325 1646,1307 1676,1323 1706,1325 1766,1325 1786,1335 1806,1336 1826,1345 1860,1365 1900,1381 1976,1389 2000,1395 2071,1401 2140,1403 2170,1386 2200,1379 2236,1364 2296,1354 2312,1354 2332,1348 2372,1366 2392,1366 2430,1383 2456,1382 2486,1386 2546,1384 2596,1368 2646,1358 2716,1352 2736,1344 2816,1334 2866,1325 2902,1327 2921,1316 2940,1280 2959,1245';
document.getElementById('turnover').innerHTML=bars(turnover,1441,6,17)+line('#f09a18','M'+m1.replace(/ /g,'L'),3)+line('#d028d0','M'+m2.replace(/ /g,'L'),3);
</script>
</body>
</html>
